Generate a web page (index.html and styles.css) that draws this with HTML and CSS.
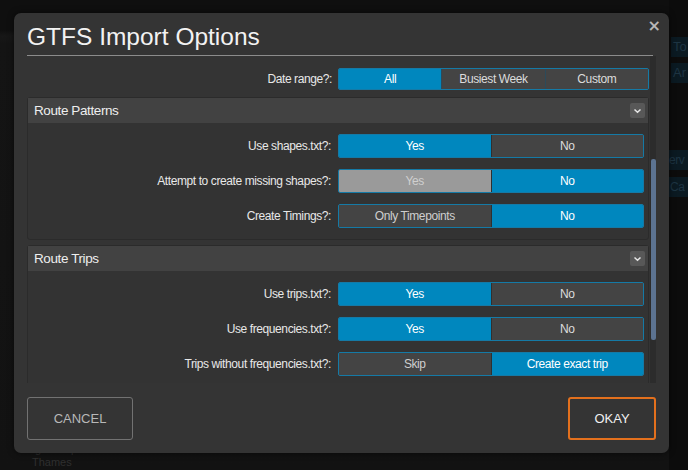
FILE: index.html
```html
<!DOCTYPE html>
<html>
<head>
<meta charset="utf-8">
<link rel="stylesheet" href="styles.css">
</head>
<body>
<div class="backdrop">
  <div class="bg-side">
    <div class="bg-chip chip-1">To</div>
    <div class="bg-chip chip-2">Ar</div>
    <div class="bg-chip chip-3">erv</div>
    <div class="bg-chip chip-4">Ca</div>
  </div>
  <div class="bg-place">
    <span class="bg-line">Kingston upon</span>
    <span class="bg-line indent">Thames</span>
  </div>
</div>

<div class="dialog">
  <button class="close" aria-label="Close">&#215;</button>
  <h1 class="title">GTFS Import Options</h1>
  <div class="divider"></div>

  <div class="scroller">
    <div class="scroll-content">
      <div class="date-row">
        <span class="label">Date range?:</span>
        <div class="seg seg-3">
          <span class="opt on">All</span>
          <span class="opt">Busiest Week</span>
          <span class="opt">Custom</span>
        </div>
      </div>

      <section class="panel">
        <div class="panel-head">
          <span class="panel-title">Route Patterns</span>
          <span class="toggle"><svg width="9" height="6" viewBox="0 0 9 6"><path d="M1.5 1.5 L4.5 4.3 L7.5 1.5" fill="none" stroke="#e6e6e6" stroke-width="1.5"/></svg></span>
        </div>
        <div class="panel-body">
          <span class="label">Use shapes.txt?:</span>
          <div class="seg">
            <span class="opt on">Yes</span>
            <span class="opt">No</span>
          </div>
          <span class="label">Attempt to create missing shapes?:</span>
          <div class="seg">
            <span class="opt disabled">Yes</span>
            <span class="opt on">No</span>
          </div>
          <span class="label">Create Timings?:</span>
          <div class="seg">
            <span class="opt dim">Only Timepoints</span>
            <span class="opt on">No</span>
          </div>
        </div>
      </section>

      <section class="panel">
        <div class="panel-head">
          <span class="panel-title">Route Trips</span>
          <span class="toggle"><svg width="9" height="6" viewBox="0 0 9 6"><path d="M1.5 1.5 L4.5 4.3 L7.5 1.5" fill="none" stroke="#e6e6e6" stroke-width="1.5"/></svg></span>
        </div>
        <div class="panel-body">
          <span class="label">Use trips.txt?:</span>
          <div class="seg">
            <span class="opt on">Yes</span>
            <span class="opt">No</span>
          </div>
          <span class="label">Use frequencies.txt?:</span>
          <div class="seg">
            <span class="opt on">Yes</span>
            <span class="opt">No</span>
          </div>
          <span class="label">Trips without frequencies.txt?:</span>
          <div class="seg">
            <span class="opt dim">Skip</span>
            <span class="opt on">Create exact trip</span>
          </div>
        </div>
      </section>
    </div>
    <div class="scrollbar"><div class="thumb"></div></div>
  </div>

  <div class="footer">
    <button class="btn cancel">CANCEL</button>
    <button class="btn okay">OKAY</button>
  </div>
</div>
</body>
</html>
```

FILE: styles.css
```css
* { box-sizing: border-box; }

html, body {
  margin: 0;
  padding: 0;
  width: 688px;
  height: 470px;
  overflow: hidden;
  background: #131313;
  font-family: "Liberation Sans", Arial, sans-serif;
}

.backdrop {
  position: relative;
  width: 688px;
  height: 470px;
  background: linear-gradient(#0f0f0f 0, #0f0f0f 30px, #171717 36px, #141414 44px, #121212 100%);
}

.bg-side {
  position: absolute;
  left: 669px;
  top: 0;
  width: 19px;
  height: 470px;
  background: #0c0c0c;
}

.bg-chip {
  position: absolute;
  left: 2px;
  width: 17px;
  height: 20px;
  overflow: hidden;
  background: #0b1a22;
  color: #1d3442;
  font-size: 13px;
  line-height: 20px;
  padding-left: 2px;
  white-space: nowrap;
}
.chip-1 { top: 37px; }
.chip-2 { top: 63px; }
.chip-3 { top: 150px; left: 0; width: 19px; font-size: 12px; letter-spacing: -0.5px; padding-left: 0; }
.chip-4 { top: 177px; left: 0; width: 19px; font-size: 12px; padding-left: 1px; letter-spacing: -0.5px; }

.bg-place {
  position: absolute;
  left: 19px;
  top: 443px;
  display: flex;
  flex-direction: column;
  color: #2f2f2f;
  font-size: 11px;
  line-height: 13px;
}
.bg-line.indent { padding-left: 13px; }

.dialog {
  position: absolute;
  left: 14px;
  top: 13px;
  width: 655px;
  height: 440px;
  background: #343434;
  border-radius: 7px;
  padding: 10px 13px 13px 13px;
  display: flex;
  flex-direction: column;
  box-shadow: 0 0 6px rgba(0,0,0,0.6);
}

.close {
  position: absolute;
  right: 8px;
  top: 4px;
  border: 0;
  background: transparent;
  color: #b8b8b8;
  font-family: "DejaVu Sans", sans-serif;
  font-size: 16px;
  font-weight: bold;
  line-height: 18px;
  padding: 0;
  cursor: pointer;
}

.title {
  margin: 0;
  font-size: 24.5px;
  font-weight: normal;
  line-height: 28px;
  color: #f2f2f2;
}

.divider {
  margin-top: 4px;
  margin-right: 3px;
  height: 1px;
  background: #8c8c8c;
  flex: none;
}

.scroller {
  height: 327px;
  flex: none;
  display: flex;
  gap: 1px;
  overflow: hidden;
}

.scroll-content {
  width: 622px;
  flex: none;
  padding-top: 12px;
}

.label {
  color: #e8e8e8;
  font-size: 12px;
  letter-spacing: -0.4px;
  text-align: right;
  white-space: nowrap;
}

.date-row {
  display: grid;
  grid-template-columns: 1fr 311px;
  column-gap: 6px;
  align-items: center;
  height: 22px;
}

.seg {
  display: flex;
  height: 24px;
  border: 1px solid #157aa6;
  border-radius: 2px;
  background: #444;
  overflow: hidden;
}
.date-row .seg { height: 22px; }

.opt {
  flex: 1 1 0;
  display: flex;
  align-items: center;
  justify-content: center;
  font-size: 12px;
  letter-spacing: -0.4px;
  color: #dcdcdc;
  background: #444;
}
.opt + .opt { border-left: 1px solid #303030; }
.opt.on { background: #0087be; color: #fff; }
.opt.disabled { background: #9a9a9a; color: #cfcfcf; }
.opt.dim { color: #cfcfcf; }
.seg-3 .opt + .opt { border-left: 1px solid #2c4a5a; }

.panel {
  margin-top: 7px;
  border: 1px solid #2b2b2b;
  border-radius: 3px;
  background: #333;
}
.panel + .panel { margin-top: 5px; }

.panel-head {
  height: 25px;
  background: #424242;
  display: flex;
  align-items: center;
  justify-content: space-between;
  padding: 0 3px 0 6px;
}

.panel-title {
  color: #eeeeee;
  font-size: 13.5px;
  letter-spacing: -0.4px;
}

.toggle {
  width: 15px;
  height: 15px;
  background: #585858;
  border-radius: 2px;
  display: flex;
  align-items: center;
  justify-content: center;
}

.panel-body {
  display: grid;
  grid-template-columns: 1fr 306px;
  column-gap: 7px;
  row-gap: 11px;
  align-items: center;
  padding: 11px 4px 11px 0;
}

.scrollbar {
  width: 7px;
  flex: none;
  background: #2c2c2c;
  padding: 103px 1px 0 1px;
}
.thumb {
  height: 181px;
  background: #5c7391;
  border-radius: 2px;
}

.footer {
  margin-top: 14px;
  display: flex;
  justify-content: space-between;
}

.btn {
  height: 43px;
  border-radius: 3px;
  background: transparent;
  font-family: "Liberation Sans", Arial, sans-serif;
  font-size: 13px;
  cursor: pointer;
}
.cancel {
  width: 106px;
  border: 1px solid #727272;
  color: #b8b8b8;
}
.okay {
  width: 88px;
  border: 2px solid #e3701d;
  color: #f0f0f0;
}
```
